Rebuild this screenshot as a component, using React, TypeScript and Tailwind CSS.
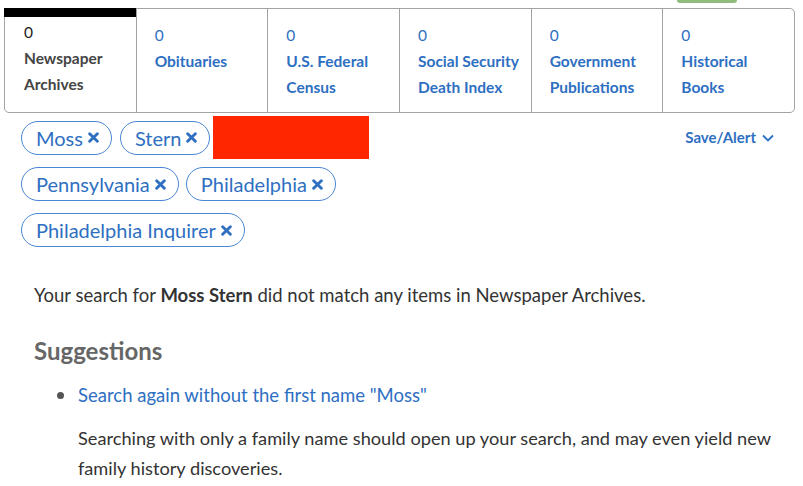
import { useState } from 'react'

type Tab = { key: string; count: number; label: string[] }

const TABS: Tab[] = [
  { key: 'newspapers', count: 0, label: ['Newspaper', 'Archives'] },
  { key: 'obits', count: 0, label: ['Obituaries'] },
  { key: 'census', count: 0, label: ['U.S. Federal', 'Census'] },
  { key: 'ssdi', count: 0, label: ['Social Security', 'Death Index'] },
  { key: 'gov', count: 0, label: ['Government', 'Publications'] },
  { key: 'books', count: 0, label: ['Historical', 'Books'] },
]

const FONT = { fontFamily: 'Lato, "Open Sans", "Liberation Sans", sans-serif' }

function Chip({ label, onRemove }: { label: string; onRemove?: () => void }) {
  return (
    <span className="inline-flex h-[34px] items-center gap-[5px] rounded-full border border-[#4a86d3] bg-white pl-[14px] pr-[12px] text-[20px] leading-none text-[#2e6fc2]">
      {label}
      <button type="button" onClick={onRemove} className="flex items-center">
        <svg width="11" height="11" viewBox="0 0 10 10">
          <path d="M1.5 1.5 L8.5 8.5 M8.5 1.5 L1.5 8.5" stroke="#2e6fc2" strokeWidth="2.6" strokeLinecap="round" />
        </svg>
      </button>
    </span>
  )
}

export default function App() {
  const [active] = useState('newspapers')

  return (
    <div className="h-[486px] w-[803px] overflow-hidden bg-white text-[#333]" style={FONT}>
      <div className="h-[8px]">
        <div className="ml-[677px] h-[3px] w-[60px] rounded-b-[3px] bg-[#8fbb7d]" />
      </div>

      <div className="mx-[4px] mr-[8px] flex h-[105px] rounded-[5px] border border-[#a3a3a3]">
        {TABS.map((t, i) => {
          const isActive = t.key === active
          return (
            <div key={t.key} className={`flex-1 ${i > 0 ? 'border-l border-[#a3a3a3]' : ''}`}>
              {isActive ? (
                <>
                  <div className="-ml-px -mt-px h-[9px] bg-black" />
                  <div className="pl-[19px] pt-[2px] text-[15.5px] leading-[26px]">
                    <div className="text-[#222]">{t.count}</div>
                    {t.label.map(l => (
                      <div key={l} className="font-bold text-[#444]">{l}</div>
                    ))}
                  </div>
                </>
              ) : (
                <div className="pl-[18px] pt-[13px] text-[15.5px] leading-[26px] text-[#2e6fc2]">
                  <div>{t.count}</div>
                  {t.label.map(l => (
                    <div key={l} className="font-bold">{l}</div>
                  ))}
                </div>
              )}
            </div>
          )
        })}
      </div>

      <div className="pl-[21px] pr-[29px] pt-[3px]">
        <div className="flex h-[43px] items-center">
          <div className="flex items-center gap-[8px]">
            <Chip label="Moss" />
            <Chip label="Stern" />
          </div>
          <div className="ml-[3px] h-[43px] w-[156px] bg-[#ff2600]" />
          <button type="button" className="ml-auto flex items-center gap-[6px] text-[15px] font-bold text-[#2e6fc2]">
            Save/Alert
            <svg width="12" height="8" viewBox="0 0 12 8">
              <path d="M1 1.5 L6 6.5 L11 1.5" fill="none" stroke="#2e6fc2" strokeWidth="1.8" />
            </svg>
          </button>
        </div>
        <div className="mt-[8px] flex gap-[7px]">
          <Chip label="Pennsylvania" />
          <Chip label="Philadelphia" />
        </div>
        <div className="mt-[12px] flex">
          <Chip label="Philadelphia Inquirer" />
        </div>
      </div>

      <div className="pl-[34px] pr-[20px]">
        <p className="mt-[35px] text-[18.5px] leading-[26px] text-[#333]">
          Your search for <span className="font-bold">Moss Stern</span> did not match any items in Newspaper Archives.
        </p>
        <h2 className="mt-[28px] text-[24px] font-bold leading-[30px] text-[#666]">Suggestions</h2>
        <ul className="mt-[16px]">
          <li className="flex">
            <span className="mt-[10px] ml-[23px] mr-[14px] h-[7px] w-[7px] shrink-0 rounded-full bg-[#555]" />
            <div>
              <a href="#" className="text-[18.5px] leading-[26px] text-[#2e6fc2]">
                Search again without the first name "Moss"
              </a>
              <p className="mt-[15px] text-[18.2px] leading-[30px] text-[#333]">
                Searching with only a family name should open up your search, and may even yield new family history discoveries.
              </p>
            </div>
          </li>
        </ul>
      </div>
    </div>
  )
}
